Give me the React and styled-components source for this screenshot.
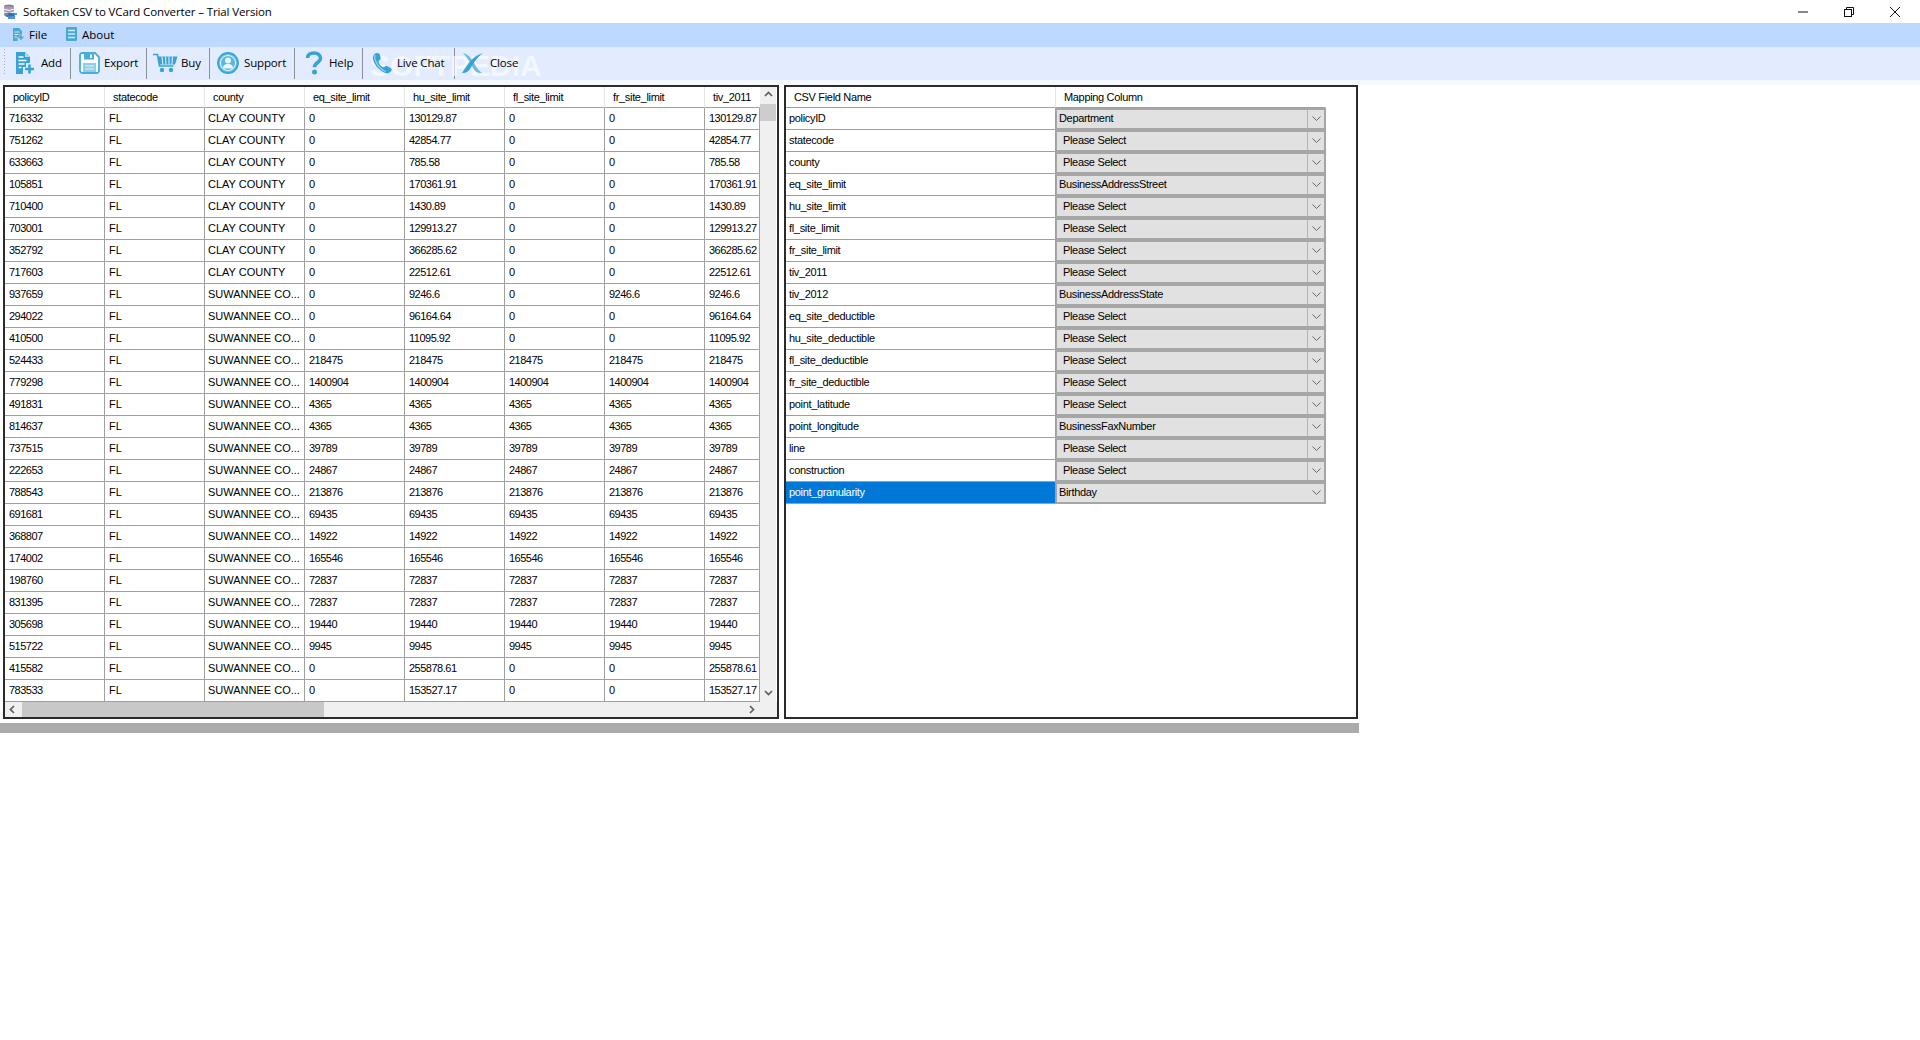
import styled, { createGlobalStyle } from 'styled-components';

const GlobalStyle = createGlobalStyle`
  html, body {
    margin: 0;
    padding: 0;
    background: #fff;
    overflow: hidden;
  }
  * { box-sizing: border-box; }
`;

const Wrap = styled.div`
  width: 1920px;
  height: 1040px;
  background: #fff;
  font-family: "Liberation Sans", Arial, sans-serif;
  font-size: 11px;
  letter-spacing: -0.33px;
  color: #000;
`;

const TitleBar = styled.div`
  height: 23px;
  display: flex;
  align-items: center;
  padding: 0 2px 0 3px;
  background: #fff;
`;

const TitleText = styled.span`
  margin-left: 5px;
  font-family: "Open Sans", sans-serif;
  font-size: 11.5px;
  letter-spacing: -0.12px;
  flex: 1;
`;

const WinButton = styled.div`
  width: 46px;
  height: 23px;
  display: flex;
  align-items: center;
  justify-content: center;
`;

const MenuBar = styled.div`
  height: 24px;
  padding-bottom: 2px;
  background: #bdd9ff;
  display: flex;
  align-items: center;
`;

const MenuItem = styled.div`
  display: flex;
  align-items: center;
  gap: 5px;
  width: ${p => p.$w}px;
  padding-left: ${p => p.$pad}px;
  font-family: "Open Sans", sans-serif;
  font-size: 11.5px;
  letter-spacing: 0;
`;

const ToolBar = styled.div`
  position: relative;
  height: 33px;
  background: #e3ecfe;
  display: flex;
  align-items: center;
  padding-left: 3px;
`;

const Grip = styled.div`
  width: 5px;
  height: 28px;
  margin-bottom: 4px;
  background-image: radial-gradient(circle, #a8adb5 0.8px, transparent 1px);
  background-size: 3px 3px;
  background-repeat: repeat-y;
`;

const ToolItem = styled.div`
  position: relative;
  z-index: 1;
  width: ${p => p.$w}px;
  height: 32px;
  margin-bottom: 1px;
  display: flex;
  align-items: center;
  gap: ${p => p.$gap}px;
  padding-left: ${p => p.$pad}px;
  font-family: "Open Sans", sans-serif;
  font-size: 11.5px;
  letter-spacing: -0.15px;
`;

const ToolLabel = styled.span`
  margin-bottom: 1px;
`;

const ToolSep = styled.div`
  width: 1px;
  height: 31px;
  margin-bottom: 1px;
  background: #8b9098;
`;

const Watermark = styled.div`
  position: absolute;
  left: 370px;
  top: 2px;
  z-index: 0;
  font-family: "Liberation Sans", sans-serif;
  font-weight: 700;
  font-size: 30px;
  letter-spacing: 0;
  color: rgba(255, 255, 255, 0.6);
  pointer-events: none;
`;

const Band = styled.div`
  height: 5px;
  background: #f5f8fe;
`;

const Panels = styled.div`
  display: flex;
  gap: 5px;
  padding-left: 3px;
`;

const Panel = styled.div`
  width: ${p => p.$w}px;
  height: 634px;
  border: 2px solid #2b2b2b;
  background: #fff;
  display: flex;
  flex-direction: column;
`;

const TableRow = styled.div`
  display: flex;
  height: ${p => (p.$head ? 21 : 22)}px;
  flex: none;
`;

const HeadCell = styled.div`
  width: ${p => p.$w}px;
  flex: none;
  padding-left: 8px;
  line-height: 21px;
  white-space: nowrap;
  overflow: hidden;
  background: #fff;
  border-right: 1px solid ${p => (p.$last ? 'transparent' : '#e6e6e6')};
  border-bottom: 1px solid #a0a0a0;
`;

const Cell = styled.div`
  width: ${p => p.$w}px;
  flex: none;
  padding-left: ${p => p.$pad ?? 4}px;
  line-height: 21px;
  letter-spacing: ${p => (p.$kind === 'caps' ? '0' : p.$kind === 'num' ? '-0.5px' : 'inherit')};
  white-space: nowrap;
  overflow: hidden;
  background: ${p => (p.$selected ? '#0078d7' : '#fff')};
  color: ${p => (p.$selected ? '#fff' : '#000')};
  border-right: 1px solid #a0a0a0;
  border-bottom: 1px solid #a0a0a0;
`;

const TableBody = styled.div`
  display: flex;
  flex: none;
`;

const VScroll = styled.div`
  width: 16px;
  background: #f0f0f0;
  display: flex;
  flex-direction: column;
  align-items: stretch;
`;

const VArrow = styled.div`
  height: 17px;
  display: flex;
  align-items: center;
  justify-content: center;
  flex: none;
`;

const VThumb = styled.div`
  height: 17px;
  background: #cdcdcd;
  flex: none;
`;

const VSpace = styled.div`
  flex: 1;
`;

const HScroll = styled.div`
  height: 15px;
  background: #f0f0f0;
  display: flex;
  align-items: center;
  flex: none;
`;

const HArrow = styled.div`
  width: 17px;
  height: 15px;
  display: flex;
  align-items: center;
  justify-content: center;
  flex: none;
`;

const HThumb = styled.div`
  width: 302px;
  height: 15px;
  background: #c8c8c8;
  flex: none;
`;

const HSpace = styled.div`
  width: 420px;
  flex: none;
`;

const ComboCell = styled.div`
  width: 270px;
  height: 22px;
  flex: none;
  display: flex;
  background: #e1e1e1;
  border: 2px solid #a6a6a6;
  border-left-width: 1px;
`;

const ComboText = styled.div`
  flex: 1;
  line-height: 17px;
  padding-left: ${p => (p.$plain ? 6 : 2)}px;
  white-space: nowrap;
`;

const ComboArrow = styled.div`
  width: 17px;
  display: flex;
  align-items: center;
  justify-content: center;
  border-left: 1px solid ${p => (p.$selected ? 'transparent' : '#b4b4b4')};
`;

const GrayBar = styled.div`
  width: 1359px;
  height: 10px;
  margin-top: 4px;
  background: #ababab;
`;

// ---- icons ----
const TEAL = '#36a3d4';

const AppIcon = () => (
  <svg width="15" height="15" viewBox="0 0 15 15">
    <ellipse cx="6" cy="2.5" rx="5" ry="2" fill="#8f7f9e" />
    <rect x="1" y="2.5" width="10" height="7.5" fill="#a79ab2" />
    <path d="M1 5.2q5 2.4 10 0M1 8q5 2.4 10 0" stroke="#fff" fill="none" />
    <ellipse cx="6" cy="10.5" rx="5" ry="2" fill="#8f7f9e" />
    <path d="M3 12h8l-1.5-2M14 10H6l1.500 2M5 14h7" stroke="#1f73c6" strokeWidth="1.6" fill="none" />
  </svg>
);

const MinIcon = () => (
  <svg width="10" height="10" viewBox="0 0 10 10"><path d="M0 5h10" stroke="#111" /></svg>
);

const RestoreIcon = () => (
  <svg width="10" height="10" viewBox="0 0 10 10" fill="none" stroke="#111">
    <rect x="0.5" y="2.500" width="7" height="7" />
    <path d="M2.500 2.500V.5h7v7H7.500" />
  </svg>
);

const CloseWinIcon = () => (
  <svg width="10" height="10" viewBox="0 0 10 10"><path d="M0 0l10 10M10 0L0 10" stroke="#111" /></svg>
);

const FileMenuIcon = () => (
  <svg width="11" height="13" viewBox="0 0 11 13">
    <path d="M0 0h6l3 3v3.500H6.500V9H4.500v4H0z" fill="#4aa8d2" />
    <path d="M1.500 4h5M1.500 6.500h4M1.500 9h2.500" stroke="#d6eef8" />
    <path d="M8 7v5M5.500 9.500h5" stroke="#4aa8d2" strokeWidth="1.600" />
  </svg>
);

const AboutMenuIcon = () => (
  <svg width="11" height="14" viewBox="0 0 11 14">
    <rect width="11" height="14" rx="1" fill="#4aa8d2" />
    <path d="M2 3.500h7M2 7h7M2 10.500h7" stroke="#cfe9f5" strokeWidth="1.300" />
  </svg>
);

const AddIcon = () => (
  <svg width="20" height="22" viewBox="0 0 20 22">
    <path d="M1 0h9l5 5v6h-4v4H8v7H1z" fill={TEAL} />
    <path d="M10 0v5h5z" fill="#a8dbf0" />
    <path d="M3.500 5h5M3.500 8.500h8M3.500 12h6M3.500 15.500h3" stroke="#fff" strokeWidth="1.400" />
    <path d="M14.500 12.500v9M10 17h9" stroke={TEAL} strokeWidth="2.600" />
  </svg>
);

const ExportIcon = () => (
  <svg width="21" height="22" viewBox="0 0 21 22">
    <path d="M3 1h13l4 4v13.500a2.500 2.500 0 0 1-2.500 2.500h-14A2.500 2.500 0 0 1 1 18.500V3a2 2 0 0 1 2-2z" fill="#fff" stroke="#45aedb" strokeWidth="1.800" />
    <rect x="5" y="1.500" width="10" height="6" fill="#45aedb" />
    <rect x="11" y="2.500" width="2" height="3.500" fill="#fff" />
    <rect x="4" y="11" width="13" height="9" fill="#8fcde8" />
    <path d="M6 14h9M6 17h9" stroke="#e4f4fb" />
  </svg>
);

const CartIcon = () => (
  <svg width="25" height="20" viewBox="0 0 25 20">
    <path d="M0 1.500h4.500l2 11.500h14" fill="none" stroke={TEAL} strokeWidth="1.600" />
    <path d="M5 3.500h19.500l-2.500 8H6.500z" fill={TEAL} />
    <path d="M9 3.500l.8 8M12.500 3.500l.4 8M16 3.500v8M19.500 3.500l-.6 8" stroke="#e3ecfe" strokeWidth="1.100" />
    <circle cx="9" cy="17" r="2.200" fill={TEAL} />
    <circle cx="18" cy="17" r="2.200" fill={TEAL} />
  </svg>
);

const SupportIcon = () => (
  <svg width="22" height="22" viewBox="0 0 22 22">
    <circle cx="11" cy="11" r="10" fill="#7cc5e6" stroke="#38a6d6" strokeWidth="1.800" />
    <circle cx="11" cy="11" r="7.500" fill="#5db6de" stroke="#e3f3fb" />
    <circle cx="11" cy="8.500" r="3" fill="#e8f6fc" />
    <path d="M6 16.500c0-3.500 2-4.500 5-4.500s5 1 5 4.500z" fill="#e8f6fc" />
  </svg>
);

const HelpIcon = () => (
  <svg width="18" height="24" viewBox="0 0 18 24">
    <path d="M2.500 7C2.500 3.500 5.500 2 9 2s6.500 2 6.500 5.300c0 4.200-6 4.200-6 9" fill="none" stroke={TEAL} strokeWidth="3.600" />
    <circle cx="9.500" cy="21" r="2.500" fill={TEAL} />
  </svg>
);

const PhoneIcon = () => (
  <svg width="21" height="22" viewBox="0 0 21 22">
    <path d="M2 2.500C5 0 7.500 1 8 3l.8 3.500c.2 1-2.500 2-2.300 3.300.5 2.500 2.700 5 4.700 5.500 1.300.3 2.300-2 3.300-1.500l4.500 2.500c1.500 1 .5 3.500-2.500 5C11 23 -3 10 2 2.500z" fill={TEAL} />
    <path d="M3 3C1.500 8 7 17 13.500 19.500" stroke="#9ad4ec" fill="none" strokeWidth="1.200" />
  </svg>
);

const CloseToolIcon = () => (
  <svg width="21" height="22" viewBox="0 0 21 22">
    <path d="M1 1c5 1 8 5 11 10s5 8 8 10c-4 .5-7-1-9-5S6 6 1 1z" fill="#6fbbdd" />
    <path d="M21 1C14 3 9 8 6 12s-4 6-6 9c3 .5 6-1 8-4s6-11 13-16z" fill={TEAL} />
  </svg>
);

const ScrollChevron = ({ dir }) => {
  const paths = {
    up: 'M1 5l3.500-3.500L8 5',
    down: 'M1 2l3.500 3.500L8 2',
    left: 'M5 1L1.500 4.500 5 8',
    right: 'M2 1l3.500 3.500L2 8',
  };
  return (
    <svg width="9" height="9" viewBox="0 0 9 9" fill="none" stroke="#5d5d5d" strokeWidth="1.700">
      <path d={paths[dir]} />
    </svg>
  );
};

const ComboChevron = () => (
  <svg width="9" height="6" viewBox="0 0 9 6" fill="none" stroke="#666">
    <path d="M.5.5l4 4 4-4" />
  </svg>
);

// ---- data ----
const leftCols = ['policyID', 'statecode', 'county', 'eq_site_limit', 'hu_site_limit', 'fl_site_limit', 'fr_site_limit', 'tiv_2011'];
const leftWidths = [100, 100, 100, 100, 100, 100, 100, 55];

const CLAY = 'CLAY COUNTY';
const SUW = 'SUWANNEE CO...';

const rows = [
  ['716332', CLAY, '0', '130129.87', '0', '0', '130129.87'],
  ['751262', CLAY, '0', '42854.77', '0', '0', '42854.77'],
  ['633663', CLAY, '0', '785.58', '0', '0', '785.58'],
  ['105851', CLAY, '0', '170361.91', '0', '0', '170361.91'],
  ['710400', CLAY, '0', '1430.89', '0', '0', '1430.89'],
  ['703001', CLAY, '0', '129913.27', '0', '0', '129913.27'],
  ['352792', CLAY, '0', '366285.62', '0', '0', '366285.62'],
  ['717603', CLAY, '0', '22512.61', '0', '0', '22512.61'],
  ['937659', SUW, '0', '9246.6', '0', '9246.6', '9246.6'],
  ['294022', SUW, '0', '96164.64', '0', '0', '96164.64'],
  ['410500', SUW, '0', '11095.92', '0', '0', '11095.92'],
  ['524433', SUW, '218475', '218475', '218475', '218475', '218475'],
  ['779298', SUW, '1400904', '1400904', '1400904', '1400904', '1400904'],
  ['491831', SUW, '4365', '4365', '4365', '4365', '4365'],
  ['814637', SUW, '4365', '4365', '4365', '4365', '4365'],
  ['737515', SUW, '39789', '39789', '39789', '39789', '39789'],
  ['222653', SUW, '24867', '24867', '24867', '24867', '24867'],
  ['788543', SUW, '213876', '213876', '213876', '213876', '213876'],
  ['691681', SUW, '69435', '69435', '69435', '69435', '69435'],
  ['368807', SUW, '14922', '14922', '14922', '14922', '14922'],
  ['174002', SUW, '165546', '165546', '165546', '165546', '165546'],
  ['198760', SUW, '72837', '72837', '72837', '72837', '72837'],
  ['831395', SUW, '72837', '72837', '72837', '72837', '72837'],
  ['305698', SUW, '19440', '19440', '19440', '19440', '19440'],
  ['515722', SUW, '9945', '9945', '9945', '9945', '9945'],
  ['415582', SUW, '0', '255878.61', '0', '0', '255878.61'],
  ['783533', SUW, '0', '153527.17', '0', '0', '153527.17'],
];

const PS = 'Please Select';
const mapping = [
  ['policyID', 'Department'],
  ['statecode', PS],
  ['county', PS],
  ['eq_site_limit', 'BusinessAddressStreet'],
  ['hu_site_limit', PS],
  ['fl_site_limit', PS],
  ['fr_site_limit', PS],
  ['tiv_2011', PS],
  ['tiv_2012', 'BusinessAddressState'],
  ['eq_site_deductible', PS],
  ['hu_site_deductible', PS],
  ['fl_site_deductible', PS],
  ['fr_site_deductible', PS],
  ['point_latitude', PS],
  ['point_longitude', 'BusinessFaxNumber'],
  ['line', PS],
  ['construction', PS],
  ['point_granularity', 'Birthday'],
];

const tools = [
  { label: 'Add', w: 62, pad: 7, gap: 6, Icon: AddIcon },
  { label: 'Export', w: 75, pad: 8, gap: 4, Icon: ExportIcon },
  { label: 'Buy', w: 62, pad: 6, gap: 3, Icon: CartIcon },
  { label: 'Support', w: 84, pad: 7, gap: 5, Icon: SupportIcon },
  { label: 'Help', w: 67, pad: 10, gap: 6, Icon: HelpIcon },
  { label: 'Live Chat', w: 91, pad: 9, gap: 4, Icon: PhoneIcon },
  { label: 'Close', w: 72, pad: 7, gap: 7, Icon: CloseToolIcon },
];

const App = () => {
  return (
    <Wrap>
      <GlobalStyle />
      <TitleBar>
        <AppIcon />
        <TitleText>Softaken CSV to VCard Converter – Trial Version</TitleText>
        <WinButton><MinIcon /></WinButton>
        <WinButton><RestoreIcon /></WinButton>
        <WinButton><CloseWinIcon /></WinButton>
      </TitleBar>

      <MenuBar>
        <MenuItem $w={66} $pad={13}><FileMenuIcon />File</MenuItem>
        <MenuItem $w={70} $pad={0}><AboutMenuIcon />About</MenuItem>
      </MenuBar>

      <ToolBar>
        <Watermark>SOFTPEDIA</Watermark>
        <Grip />
        {tools.map((t, i) => (
          <div key={t.label} style={{ display: 'contents' }}>
            <ToolItem $w={t.w} $pad={t.pad} $gap={t.gap}>
              <t.Icon />
              <ToolLabel>{t.label}</ToolLabel>
            </ToolItem>
            {i < tools.length - 1 && <ToolSep />}
          </div>
        ))}
      </ToolBar>
      <Band />

      <Panels>
        <Panel $w={776}>
          <TableBody>
            <div>
              <TableRow $head>
                {leftCols.map((c, i) => (
                  <HeadCell key={c} $w={leftWidths[i]} $last={i === 7}>{c}</HeadCell>
                ))}
              </TableRow>
              {rows.map((r) => (
                <TableRow key={r[0]}>
                  <Cell $w={100} $kind="num">{r[0]}</Cell>
                  <Cell $w={100} $kind="caps">FL</Cell>
                  {r.slice(1).map((v, i) => (
                    <Cell key={i} $w={leftWidths[i + 2]} $pad={i === 0 ? 3 : 4} $kind={i === 0 ? 'caps' : 'num'}>{v}</Cell>
                  ))}
                </TableRow>
              ))}
            </div>
            <VScroll>
              <VArrow><ScrollChevron dir="up" /></VArrow>
              <VThumb />
              <VSpace />
              <VArrow><ScrollChevron dir="down" /></VArrow>
            </VScroll>
          </TableBody>
          <HScroll>
            <HArrow><ScrollChevron dir="left" /></HArrow>
            <HThumb />
            <HSpace />
            <HArrow><ScrollChevron dir="right" /></HArrow>
          </HScroll>
        </Panel>

        <Panel $w={574}>
          <TableRow $head>
            <HeadCell $w={270}>CSV Field Name</HeadCell>
            <HeadCell $w={270} $last>Mapping Column</HeadCell>
          </TableRow>
          {mapping.map(([field, value], i) => {
            const selected = i === mapping.length - 1;
            return (
              <TableRow key={field}>
                <Cell $w={270} $pad={3} $selected={selected}>{field}</Cell>
                <ComboCell>
                  <ComboText $plain={value === PS}>{value}</ComboText>
                  <ComboArrow $selected={selected}><ComboChevron /></ComboArrow>
                </ComboCell>
              </TableRow>
            );
          })}
        </Panel>
      </Panels>

      <GrayBar />
    </Wrap>
  );
};

export default App;
